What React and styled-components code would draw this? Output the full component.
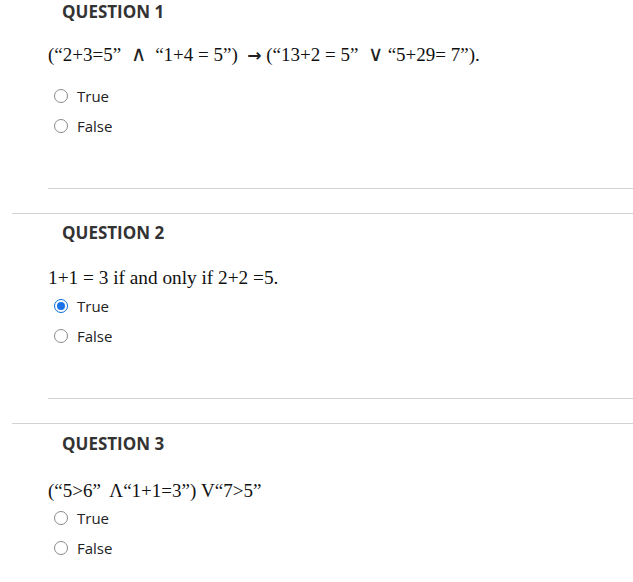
import React from 'react'
import styled, { createGlobalStyle } from 'styled-components'

const GlobalStyle = createGlobalStyle`
  html, body {
    margin: 0;
    padding: 0;
    background: #fff;
  }
`

const Page = styled.main`
  width: 633px;
  overflow: hidden;
`

const Block = styled.section`
  display: flex;
  flex-direction: column;
  padding-top: ${p => p.$top}px;
`

const Heading = styled.h3`
  margin: 0;
  padding-left: 62px;
  font-family: 'Open Sans', 'Noto Sans', sans-serif;
  font-weight: 700;
  font-size: 17px;
  line-height: 24px;
  color: #333;
`

const Prompt = styled.p`
  margin: ${p => p.$above}px 0 ${p => p.$below}px 48px;
  font-family: 'Liberation Serif', 'Times New Roman', serif;
  font-size: ${p => p.$size}px;
  line-height: 24px;
  color: #111;
  white-space: pre;
`

// logic symbols come from a different face in the reference: thin and wide
const Sym = styled.span`
  font-family: 'DejaVu Sans ExtraLight', 'DejaVu Sans', sans-serif;
  font-size: ${p => (p.$arrow ? 17 : 21)}px;
  font-weight: ${p => (p.$arrow ? 700 : 200)};
  line-height: 0;
  color: #222;
`

const Options = styled.div`
  display: flex;
  flex-direction: column;
  padding-left: 54px;
`

const Option = styled.label`
  display: flex;
  align-items: center;
  gap: 9px;
  height: 30px;
  font-family: 'Open Sans', 'Noto Sans', sans-serif;
  font-size: 15px;
  color: #222;
`

const Radio = styled.span`
  position: relative;
  box-sizing: border-box;
  width: 14px;
  height: 14px;
  border-radius: 50%;
  border: 1px solid ${p => (p.$checked ? '#0a6fd8' : '#8a8a8a')};
  background: #fff;
  &::after {
    content: '';
    display: ${p => (p.$checked ? 'block' : 'none')};
    position: absolute;
    left: 2px;
    top: 2px;
    width: 8px;
    height: 8px;
    border-radius: 50%;
    background: #1a73e8;
  }
`

const Rule = styled.hr`
  margin: 0 0 0 ${p => p.$indent}px;
  border: 0;
  border-top: 1px solid #d2d2d2;
`

const Spacer = styled.div`
  height: ${p => p.$h}px;
`

const questions = [
  {
    title: 'QUESTION 1',
    text: (
      <>
        {'(“2+3=5”  '}
        <Sym>∧</Sym>
        {'  “1+4 = 5”)  '}
        <Sym $arrow>→</Sym>
        {' (“13+2 = 5”  '}
        <Sym>∨</Sym>
        {' “5+29= 7”).'}
      </>
    ),
    size: 19,
    above: 19,
    below: 14,
    top: 0,
    checked: null,
  },
  {
    title: 'QUESTION 2',
    text: '1+1 = 3 if and only if 2+2 =5.',
    size: 19.3,
    above: 21,
    below: 1,
    top: 7,
    checked: 'True',
  },
  {
    title: 'QUESTION 3',
    text: '(“5>6”  Λ“1+1=3”) V“7>5”',
    size: 19,
    above: 23,
    below: 0,
    top: 8,
    checked: null,
  },
]

export default function App() {
  return (
    <Page>
      <GlobalStyle />
      {questions.map((q, i) => (
        <Block key={q.title} $top={q.top}>
          <Heading>{q.title}</Heading>
          <Prompt $size={q.size} $above={q.above} $below={q.below}>
            {q.text}
          </Prompt>
          <Options>
            {['True', 'False'].map(opt => (
              <Option key={opt}>
                <Radio $checked={q.checked === opt} />
                {opt}
              </Option>
            ))}
          </Options>
          {i < questions.length - 1 && (
            <>
              <Spacer $h={47} />
              <Rule $indent={48} />
              <Spacer $h={24} />
              <Rule $indent={12} />
            </>
          )}
        </Block>
      ))}
    </Page>
  )
}
